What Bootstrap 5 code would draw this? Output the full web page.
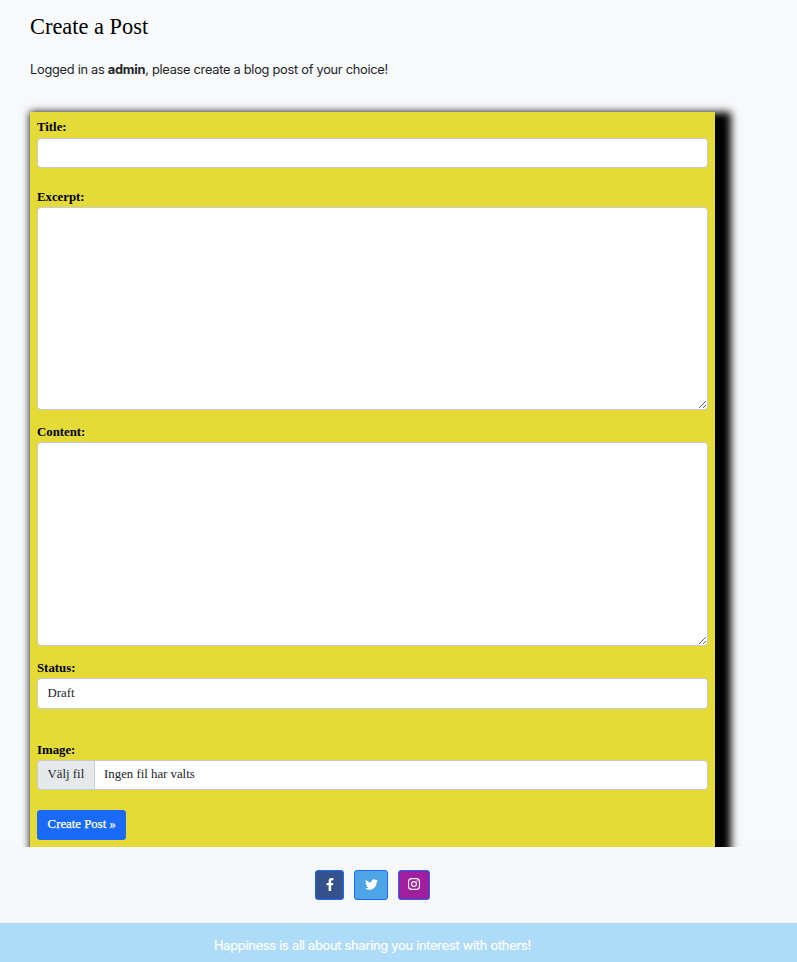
<!DOCTYPE html>
<html lang="en">
<head>
<meta charset="utf-8">
<meta name="viewport" content="width=device-width, initial-scale=1">
<title>Create a Post</title>
<link href="https://cdn.jsdelivr.net/npm/bootstrap@5.3.0/dist/css/bootstrap.min.css" rel="stylesheet">
<style>
  body { background: #f8f9fb; font-family: Inter, sans-serif; font-size: 12.8px; height: 962px; overflow: hidden; }
  .post-area { height: 847px; padding: 13px 82px 0 30px; overflow: hidden; }
  .post-title { font-family: "Liberation Serif", serif; font-size: 22.4px; line-height: 28px; color: #000; margin-bottom: 19px; }
  .post-intro { line-height: 20px; margin-bottom: 32px; letter-spacing: -.265px; }
  .post-form { background: #e4da38; height: 760px; padding: 6px 7px 0; box-shadow: 8px 8px 8px 8px #000; font-family: "Liberation Serif", serif; }
  .post-form .form-label { display: block; font-weight: 700; font-size: 12.8px; line-height: 19px; color: #000; margin: 0; height: 19px; }
  .post-form .form-control { font-size: 12.8px; line-height: 19px; padding: 4px 9.6px; border-color: #c6ccd2; border-radius: 3.5px; min-height: 0; height: 30px; }
  .post-form textarea.form-control { height: 203px; }
  .post-form .field-title .form-label { height: 20px; }
  .post-form .field-content .form-control { height: 204px; }
  .post-form .field-status .form-control { height: 31px; }
  .post-form .input-group-text { font-size: 12.8px; line-height: 19px; padding: 3px 9.9px 5px 9.6px; height: 30px; background: #e5e9ec; border-color: #c6ccd2; border-radius: 3.5px; }
  .post-form .input-group .form-control { padding-left: 9px; }
  .btn-post { font-size: 12.8px; line-height: 19px; padding: 3.5px 9.6px 5.5px; height: 30px; background: #196af7; border-color: #196af7; border-radius: 3px; -webkit-text-stroke: .25px #fff; }
  .field-title { margin-bottom: 20px; }
  .field-excerpt { margin-bottom: 13px; }
  .field-content { margin-bottom: 13px; }
  .field-status { margin-bottom: 32px; }
  .field-image { margin-bottom: 20px; }
  .social-bar { height: 76px; background: #f7f8fa; padding: 23px 52px 0 0; gap: 10px; }
  .social-bar .btn { height: 30px; padding: 0 0 2px; border: 1px solid #196af7; border-radius: 3px; color: #fff; }
  .btn-fb { width: 29px; background: #35528c; }
  .btn-tw { width: 34px; background: #4ea5e5; }
  .btn-ig { width: 32px; background: #a11e9c; }
  .tagline { height: 39px; background: #addbf8; color: #fff; padding: 6px 52px 0 0; font-size: 12.8px; letter-spacing: -.24px; -webkit-text-stroke: .2px #fff; }
</style>
<script src="https://cdn.jsdelivr.net/npm/bootstrap@5.3.0/dist/js/bootstrap.bundle.min.js"></script>
</head>
<body>
<main class="post-area">
  <h1 class="post-title fw-normal">Create a Post</h1>
  <p class="post-intro">Logged in as <strong>admin</strong>, please create a blog post of your choice!</p>
  <form class="post-form">
    <div class="field-title">
      <label class="form-label" for="title">Title:</label>
      <input class="form-control" id="title" type="text">
    </div>
    <div class="field-excerpt">
      <label class="form-label" for="excerpt">Excerpt:</label>
      <textarea class="form-control d-block" id="excerpt"></textarea>
    </div>
    <div class="field-content">
      <label class="form-label" for="content">Content:</label>
      <textarea class="form-control d-block" id="content"></textarea>
    </div>
    <div class="field-status">
      <label class="form-label" for="status">Status:</label>
      <input class="form-control" id="status" type="text" value="Draft">
    </div>
    <div class="field-image">
      <span class="form-label">Image:</span>
      <div class="input-group flex-nowrap">
        <span class="input-group-text">Välj fil</span>
        <div class="form-control">Ingen fil har valts</div>
      </div>
    </div>
    <button type="button" class="btn btn-primary btn-post">Create Post »</button>
  </form>
</main>
<footer>
  <div class="social-bar d-flex justify-content-center align-items-start">
    <a class="btn btn-fb d-flex align-items-center justify-content-center" href="#" aria-label="Facebook">
      <svg width="8" height="13" viewBox="0 0 320 512" fill="currentColor"><path d="M279.14 288l14.22-92.66h-88.91v-60.13c0-25.35 12.42-50.06 52.24-50.06h40.42V6.26S260.43 0 225.36 0c-73.22 0-121.08 44.38-121.08 124.72v70.62H22.89V288h81.39v224h100.17V288z"/></svg>
    </a>
    <a class="btn btn-tw d-flex align-items-center justify-content-center" href="#" aria-label="Twitter">
      <svg width="13" height="13" viewBox="0 0 512 512" fill="currentColor"><path d="M459.37 151.716c.325 4.548.325 9.097.325 13.645 0 138.72-105.583 298.558-298.558 298.558-59.452 0-114.68-17.219-161.137-47.106 8.447.974 16.568 1.299 25.34 1.299 49.055 0 94.213-16.568 130.274-44.832-46.132-.975-84.792-31.188-98.112-72.772 6.498.974 12.995 1.624 19.818 1.624 9.421 0 18.843-1.3 27.614-3.573-48.081-9.747-84.143-51.98-84.143-102.985v-1.299c13.969 7.797 30.214 12.67 47.431 13.319-28.264-18.843-46.781-51.005-46.781-87.391 0-19.492 5.197-37.36 14.294-52.954 51.655 63.675 129.3 105.258 216.365 109.807-1.624-7.797-2.599-15.918-2.599-24.04 0-57.828 46.782-104.934 104.934-104.934 30.213 0 57.502 12.67 76.67 33.137 23.715-4.548 46.456-13.32 66.599-25.34-7.798 24.366-24.366 44.833-46.132 57.827 21.117-2.273 41.584-8.122 60.426-16.243-14.292 20.791-32.161 39.308-52.628 54.253z"/></svg>
    </a>
    <a class="btn btn-ig d-flex align-items-center justify-content-center" href="#" aria-label="Instagram">
      <svg width="12" height="12" viewBox="0 0 12 12" fill="none" stroke="currentColor" stroke-width="1.1"><rect x=".6" y=".6" width="10.8" height="10.8" rx="3"/><circle cx="6" cy="6" r="2.4"/><circle cx="9.1" cy="2.9" r=".65" fill="currentColor" stroke="none"/></svg>
    </a>
  </div>
  <div class="tagline d-flex justify-content-center align-items-center">Happiness is all about sharing you interest with others!</div>
</footer>
</body>
</html>
